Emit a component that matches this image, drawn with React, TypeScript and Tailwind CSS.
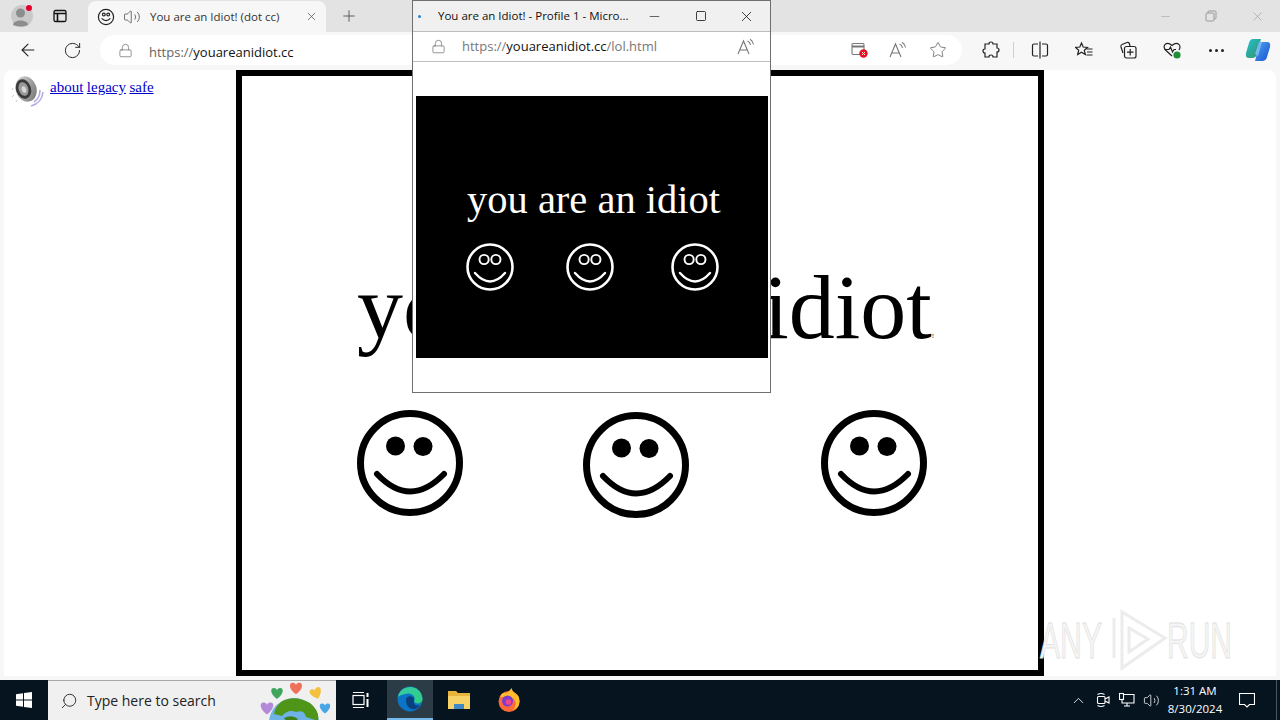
import { ArrowLeft, ChevronUp, Lock, Minus, Plus, RotateCw, Search, Square, Star, Volume2, X } from "lucide-react";

const uiFont = { fontFamily: '"Open Sans", "Noto Sans", sans-serif' };

const heart = "M0 6 C-8 0 -6.5 -6 -2.5 -5 Q-0.5 -4.5 0 -3 Q0.5 -4.5 2.5 -5 C6.5 -6 8 0 0 6Z";

function BigSmiley({ className = "" }: { className?: string }) {
  return (
    <svg viewBox="-54 -54 108 108" className={`h-[108px] w-[108px] shrink-0 ${className}`}>
      <circle r="49.5" fill="none" stroke="#000" strokeWidth="7" />
      <circle cx="-14.5" cy="-17" r="9.5" />
      <circle cx="13" cy="-16.5" r="9.5" />
      <path d="M-33 11 Q0 46 34 11" fill="none" stroke="#000" strokeWidth="6" strokeLinecap="round" />
    </svg>
  );
}

function SmallSmiley({ className = "" }: { className?: string }) {
  return (
    <svg viewBox="-24 -24 48 48" className={`h-12 w-12 shrink-0 ${className}`}>
      <circle r="22.5" fill="none" stroke="#fff" strokeWidth="2.6" />
      <circle cx="-5.9" cy="-7.5" r="4.6" fill="none" stroke="#fff" strokeWidth="1.9" />
      <circle cx="5.9" cy="-7.5" r="4.6" fill="none" stroke="#fff" strokeWidth="1.9" />
      <path d="M-15 6 Q0 23 15 6" fill="none" stroke="#fff" strokeWidth="2.4" strokeLinecap="round" />
    </svg>
  );
}

function TabSmiley() {
  return (
    <svg viewBox="0 0 18 18" className="h-[18px] w-[18px] shrink-0" fill="none" stroke="#222" strokeWidth="1.2">
      <circle cx="9" cy="9" r="7.6" />
      <circle cx="6.8" cy="6.6" r="1.4" />
      <circle cx="11.2" cy="6.6" r="1.4" />
      <path d="M4.6 10.4 Q9 15 13.4 10.4" />
    </svg>
  );
}

function Speaker() {
  return (
    <svg viewBox="0 0 34 34" className="h-[34px] w-[34px] shrink-0">
      <defs>
        <linearGradient id="cone" x1="0" y1="0" x2="1" y2="1">
          <stop offset="0" stopColor="#e6e6e6" />
          <stop offset="0.5" stopColor="#a8a8a8" />
          <stop offset="1" stopColor="#6c6c6c" />
        </linearGradient>
      </defs>
      <g fill="none" stroke="#b4aee0" strokeWidth="1.6">
        <path d="M23 27 Q29 23 29 15" />
        <path d="M20 31 Q31 28 32 17" />
      </g>
      <path d="M2 13 L1 15 M3 20 L1 22 M6 25 L5 27" stroke="#c8c8d8" strokeWidth="1" />
      <ellipse cx="15" cy="14" rx="10.5" ry="13" fill="url(#cone)" transform="rotate(-18 15 14)" />
      <ellipse cx="12.5" cy="14" rx="7.5" ry="10" fill="#3a3a3a" transform="rotate(-18 12.5 14)" />
      <ellipse cx="12.5" cy="14" rx="4.8" ry="7" fill="#9a9a9a" transform="rotate(-18 12.5 14)" />
      <ellipse cx="13" cy="14.5" rx="2.2" ry="3.4" fill="#d8d8d8" transform="rotate(-18 13 14.5)" />
    </svg>
  );
}

function Profile() {
  return (
    <svg viewBox="0 0 24 24" className="h-6 w-6">
      <circle cx="12" cy="12" r="11" fill="#c9c9c9" />
      <circle cx="10.5" cy="9" r="4.5" fill="#8d8d8d" />
      <path d="M3 21 C3 15 18 15 18 21 Q10 24 3 21Z" fill="#8d8d8d" />
      <circle cx="19" cy="4" r="3" fill="#e4002b" />
    </svg>
  );
}

function ReadAloud({ color = "#777" }: { color?: string }) {
  return (
    <svg viewBox="0 0 18 18" className="h-[18px] w-[18px]" fill="none" stroke={color} strokeWidth="1.1">
      <path d="M1 16 L6.5 3 L12 16 M3 12 H10" />
      <path d="M10.5 3 Q13 4 13.5 7 M13 1.2 Q16 3 16.5 6.5" />
    </svg>
  );
}

function EdgeLogo() {
  return (
    <svg viewBox="0 0 26 26" className="h-[26px] w-[26px]">
      <defs>
        <linearGradient id="edgeA" x1="0" y1="0" x2="1" y2="1">
          <stop offset="0" stopColor="#37c9a5" />
          <stop offset="1" stopColor="#2dd07e" />
        </linearGradient>
      </defs>
      <circle cx="13" cy="13" r="12.5" fill="#0c74c4" />
      <path d="M1 11 C3 -2 24 -3 25.5 13 C25.5 18 18 19 17 15 C20 10 13 6 8 8 C4 9 2 10 1 11Z" fill="url(#edgeA)" />
      <path d="M9 14 C9 9 18 9 17 15 C16 20 21 20 23 19 C19 26 9 24 9 14Z" fill="#0b3f7e" />
    </svg>
  );
}

function FolderLogo() {
  return (
    <svg viewBox="0 0 24 22" className="h-[22px] w-6">
      <path d="M1 2 H9 L11 4 H23 V20 H1Z" fill="#e9b43c" />
      <path d="M1 7 H23 V20 H1Z" fill="#f7d267" />
      <rect x="7" y="15" width="10" height="5" fill="#3f88c5" />
    </svg>
  );
}

function FirefoxLogo() {
  return (
    <svg viewBox="0 0 24 24" className="h-6 w-6">
      <circle cx="12" cy="13.5" r="10.5" fill="#ff6a35" />
      <path d="M3 9 Q5 4 9 5 Q13 3 14.5 0 Q15 3 18 5 Q23 8 22.5 14 Q22 20 16 22 Q21 16 17 11 Q13 7 8 9 Q5 9 3 9Z" fill="#ffbd2e" />
      <circle cx="10.5" cy="13" r="5.5" fill="#7e3bd0" />
      <circle cx="11.5" cy="14" r="2.8" fill="#f0468c" />
    </svg>
  );
}

function Copilot() {
  return (
    <svg viewBox="0 0 26 26" className="h-[26px] w-[26px]">
      <defs>
        <linearGradient id="copA" x1="0" y1="0" x2="1" y2="1">
          <stop offset="0" stopColor="#1fc3d8" />
          <stop offset="1" stopColor="#3a8f5d" />
        </linearGradient>
        <linearGradient id="copB" x1="0" y1="0" x2="1" y2="1">
          <stop offset="0" stopColor="#4ba8f2" />
          <stop offset="1" stopColor="#1b4fd0" />
        </linearGradient>
      </defs>
      <path d="M8 2 H16 L12 17 Q11 21 7 21 H4 Q0 21 1 16 L4 6 Q5 2 8 2Z" fill="url(#copA)" />
      <path d="M14 5 H22 Q26 5 25 10 L22 20 Q21 24 17 24 H10 L14 9 Z" fill="url(#copB)" />
      <path d="M10 17 L14 5 H17 L13 19Z" fill="#7ab5f5" />
    </svg>
  );
}

function Globe() {
  return (
    <svg viewBox="0 0 76 40" className="h-10 w-[76px]">
      <circle cx="34" cy="42" r="25" fill="#6fb2e8" />
      <path d="M21 21 Q34 13 50 22 Q60 30 58 40 L46 36 Q44 28 36 31 Q28 28 22 35 L14 33 Q15 26 21 21Z" fill="#4f9618" />
      <path d="M24 37 Q32 33 38 38 L36 40 H26Z" fill="#3f7f14" />
      <g transform="translate(36 7) scale(1.05)"><path d={heart} fill="#f0715a" /></g>
      <g transform="translate(17 12)"><path d={heart} fill="#3fa55c" /></g>
      <g transform="translate(56 12) rotate(-20)"><path d={heart} fill="#f3c13d" /></g>
      <g transform="translate(7 27) scale(1.1)"><path d={heart} fill="#b48ad8" /></g>
      <g transform="translate(65 27) scale(0.9)"><path d={heart} fill="#49a6e6" /></g>
    </svg>
  );
}

function Watermark() {
  return (
    <svg viewBox="0 0 210 70" className="absolute bottom-0 right-[36px] h-[70px] w-[210px] overflow-visible">
      <g fontFamily="Liberation Sans, sans-serif" fontSize="50" fill="#f5f5f5" stroke="#e0e0e0" strokeWidth="0.8">
        <text x="10" y="52" textLength="62" lengthAdjust="spacingAndGlyphs">ANY</text>
        <text x="137" y="52" textLength="65" lengthAdjust="spacingAndGlyphs">RUN</text>
      </g>
      <g fill="none" stroke="#ececec" strokeWidth="3">
        <path d="M84 12 V52" />
        <path d="M92 6 L135 32 L92 62 V6Z" />
        <path d="M99 22 L118 33 L99 46Z" />
      </g>
    </svg>
  );
}

function Popup() {
  return (
    <div className="absolute left-[412px] top-0 flex h-[393px] w-[359px] flex-col border border-[#6f6f6f] bg-white" style={uiFont}>
      <div className="flex h-[31px] shrink-0 items-center border-b border-[#bdbdbd] bg-[#f0f0f0] text-[#111]">
        <span className="ml-[5px] h-[3px] w-[3px] rounded-full bg-[#2f7fd0]" />
        <span className="ml-[17px] w-[209px] text-[11.5px] leading-none">You are an Idiot! - Profile 1 - Micro...</span>
        <Minus className="h-[15px] w-[15px]" strokeWidth={1} />
        <Square className="ml-[33px] h-[12px] w-[12px]" strokeWidth={1.6} />
        <X className="ml-[31px] h-[17px] w-[17px]" strokeWidth={1.1} />
      </div>
      <div className="flex h-[30px] shrink-0 items-center border-b border-[#bdbdbd] bg-white">
        <Lock className="ml-[18px] h-[15px] w-[15px] text-[#666]" strokeWidth={1.1} />
        <span className="ml-[16px] w-[275px] text-[13px] leading-none text-[#777]">
          https://<span className="text-[#111]">youareanidiot.cc</span>/lol.html
        </span>
        <ReadAloud />
      </div>
      <div className="flex-1 px-[3px] pt-[34px]">
        <div className="h-[262px] w-[352px] bg-black pl-[51px] pt-[84px] text-white" style={{ fontFamily: '"Liberation Serif", serif' }}>
          <div className="whitespace-nowrap text-[40.5px] leading-[40px]">
            you are an idiot<span className="text-[3px]">!</span>
          </div>
          <div className="mt-[11px] flex">
            <SmallSmiley className="-ml-[1px]" />
            <SmallSmiley className="ml-[52px]" />
            <SmallSmiley className="ml-[57px]" />
          </div>
        </div>
      </div>
    </div>
  );
}

export default function App() {
  return (
    <div className="relative flex h-[720px] w-[1280px] flex-col overflow-hidden bg-[#f7f7f7]" style={uiFont}>
      {/* title strip */}
      <div className="flex h-8 shrink-0 items-center bg-[#e3e3e3]">
        <div className="ml-[10px] flex w-6 justify-center"><Profile /></div>
        <div className="ml-[14px] flex w-6 justify-center">
          <svg viewBox="0 0 14 14" className="h-[14px] w-[14px]" fill="none" stroke="#111" strokeWidth="1.3">
            <rect x="1" y="1.5" width="12" height="11" rx="1.5" />
            <path d="M1 4.5 H13 M4.5 4.5 V12" strokeWidth="1.6" />
          </svg>
        </div>
        <div className="ml-[16px] flex h-[31px] w-[238px] items-center self-end rounded-t-lg bg-[#f7f7f7] pl-[9px]">
          <TabSmiley />
          <Volume2 className="ml-[8px] h-[18px] w-[18px] text-[#444]" strokeWidth={1} />
          <span className="ml-[9px] w-[151px] whitespace-nowrap text-[11.5px] text-[#333]">You are an Idiot! (dot cc)</span>
          <X className="ml-[4px] h-[13px] w-[13px] text-[#555]" strokeWidth={1.4} />
        </div>
        <Plus className="ml-[14px] h-[18px] w-[18px] text-[#444]" strokeWidth={1.1} />
        <div className="ml-auto flex items-center text-[#9a9a9a]">
          <Minus className="h-[13px] w-[13px]" strokeWidth={1} />
          <svg viewBox="0 0 12 12" className="ml-[33px] h-[12px] w-[12px]" fill="none" stroke="#9a9a9a">
            <rect x="1" y="3" width="8" height="8" rx="1" />
            <path d="M3 3 V1.5 Q3 1 4 1 H10 Q11 1 11 2 V8 Q11 9 9 9" />
          </svg>
          <X className="ml-[33px] mr-[15px] h-[15px] w-[15px]" strokeWidth={1} />
        </div>
      </div>

      {/* toolbar */}
      <div className="flex h-9 shrink-0 items-center">
        <div className="flex w-[56px] justify-center"><ArrowLeft className="h-5 w-5 text-[#222]" strokeWidth={1.3} /></div>
        <div className="flex w-[32px] justify-center"><RotateCw className="h-[19px] w-[19px] text-[#222]" strokeWidth={1.2} /></div>
        <div className="ml-[12px] flex h-[30px] w-[862px] items-center rounded-full bg-white">
          <Lock className="ml-[18px] h-[15px] w-[15px] text-[#666]" strokeWidth={1.1} />
          <span className="ml-[16px] mt-[4px] text-[13px] leading-none text-[#666]">
            https://<span className="text-[#111]">youareanidiot.cc</span>
          </span>
          <div className="ml-auto flex items-center pr-[4px]">
            <div className="flex w-9 justify-center">
              <svg viewBox="0 0 18 18" className="h-[18px] w-[18px]">
                <rect x="1" y="2.5" width="12" height="11" rx="1" fill="none" stroke="#777" strokeWidth="1.1" />
                <path d="M1 5.5 H13" stroke="#777" strokeWidth="2" />
                <circle cx="12.5" cy="12.5" r="4.2" fill="#e81123" />
                <path d="M11 11 L14 14 M14 11 L11 14" stroke="#fff" strokeWidth="0.9" />
              </svg>
            </div>
            <div className="flex w-10 justify-center"><ReadAloud /></div>
            <div className="flex w-10 justify-center"><Star className="h-[18px] w-[18px] text-[#666]" strokeWidth={1.1} /></div>
          </div>
        </div>
        <div className="ml-[7px] flex w-11 justify-center">
          <svg viewBox="0 0 18 18" className="h-[18px] w-[18px]" fill="none" stroke="#222" strokeWidth="1.2">
            <path d="M7 3 Q7 1 9 1 Q11 1 11 3 H15 V7 Q17 7 17 9 Q17 11 15 11 V16 H11 Q11 14 9 14 Q7 14 7 16 H3 V12 Q1 12 1 10 Q1 8 3 8 V3Z" />
          </svg>
        </div>
        <div className="h-[16px] w-px bg-[#cfcfcf]" />
        <div className="ml-[4px] flex w-11 justify-center">
          <svg viewBox="0 0 18 18" className="h-[18px] w-[18px]" fill="none" stroke="#222" strokeWidth="1.2">
            <path d="M9 0.5 V17.5 M7 3 H3 Q1.5 3 1.5 4.5 V13.5 Q1.5 15 3 15 H7 M11 3 H15 Q16.5 3 16.5 4.5 V13.5 Q16.5 15 15 15 H11" />
          </svg>
        </div>
        <div className="flex w-11 justify-center">
          <svg viewBox="0 0 18 18" className="h-[18px] w-[18px]" fill="none" stroke="#222" strokeWidth="1.2">
            <path d="M6.5 2 L8.2 6 L12.5 6.4 L9.3 9.2 L10.3 13.5 L6.5 11.2 L2.7 13.5 L3.7 9.2 L0.5 6.4 L4.8 6Z" />
            <path d="M11.5 8 H17.5 M12 11 H17.5 M11.5 14 H17.5" />
          </svg>
        </div>
        <div className="flex w-11 justify-center">
          <svg viewBox="0 0 18 18" className="h-[18px] w-[18px]" fill="none" stroke="#222" strokeWidth="1.2">
            <path d="M4 12 L2 6 Q1.5 4 3 3.5 L8 1.5 Q10 1 10.5 3 L11 5" />
            <rect x="5.5" y="5.5" width="11.5" height="11.5" rx="2" />
            <path d="M11.2 8 V14.5 M8 11.2 H14.5" />
          </svg>
        </div>
        <div className="flex w-11 justify-center">
          <svg viewBox="0 0 18 18" className="h-[18px] w-[18px]" fill="none" stroke="#222" strokeWidth="1.2">
            <path d="M9 15 L2.5 9 Q0 6 2 3.5 Q5 1 9 4.5 Q13 1 16 3.5 Q18 6 16 9" />
            <path d="M1.5 8.5 H6 L7.5 6 L9.5 11 L11 8.5 H13" />
            <circle cx="14" cy="14" r="3.6" fill="#1f8f3a" stroke="none" />
          </svg>
        </div>
        <div className="flex w-11 justify-center gap-[3px]">
          <span className="h-[3px] w-[3px] rounded-full bg-[#222]" />
          <span className="h-[3px] w-[3px] rounded-full bg-[#222]" />
          <span className="h-[3px] w-[3px] rounded-full bg-[#222]" />
        </div>
        <div className="flex w-10 justify-center"><Copilot /></div>
      </div>

      {/* page */}
      <div className="relative mx-[4px] mt-[2px] flex h-[606px] shrink-0 rounded-t-lg bg-white" style={{ fontFamily: '"Liberation Serif", serif' }}>
        <div className="flex w-[232px] shrink-0 items-start pl-[7px] pt-[5px]">
          <Speaker />
          <div className="ml-[5px] mt-[4px] flex gap-[3.5px] text-[15px] leading-[17px] text-[#0000cc] underline">
            <span>about</span>
            <span>legacy</span>
            <span>safe</span>
          </div>
        </div>
        <div className="w-[808px] shrink-0 border-[6px] border-black pl-[115px] pt-[185px]">
          <div className="whitespace-nowrap text-[92px] leading-[92px] text-black">
            you are an idiot<span className="text-[7px]">!</span>
          </div>
          <div className="mt-[27px] flex">
            <BigSmiley className="-ml-[1px]" />
            <BigSmiley className="ml-[118px] mt-[2px]" />
            <BigSmiley className="ml-[130px]" />
          </div>
        </div>
        <Watermark />
      </div>

      {/* taskbar */}
      <div className="mt-[4px] flex h-10 shrink-0 items-center bg-[#05141f] text-white">
        <div className="flex w-12 justify-center">
          <svg viewBox="0 0 16 16" className="h-4 w-4" fill="#fff">
            <path d="M0 2.2 L7 1.2 V7.5 H0Z M8 1 L16 0 V7.5 H8Z M0 8.5 H7 V14.8 L0 13.8Z M8 8.5 H16 V16 L8 15Z" />
          </svg>
        </div>
        <div className="flex h-10 w-[288px] items-center border-t border-[#a8a8a8] bg-[#f0f0f0] pl-[12px] text-[#222]">
          <Search className="h-[18px] w-[18px] -scale-x-100" strokeWidth={1.2} />
          <span className="ml-[9px] text-[14px]">Type here to search</span>
          <div className="ml-auto overflow-hidden"><Globe /></div>
        </div>
        <div className="flex w-[49px] justify-center">
          <svg viewBox="0 0 18 18" className="h-[18px] w-[18px]" fill="none" stroke="#fff" strokeWidth="1.2">
            <path d="M1 1.5 H12 M1 16.5 H12" />
            <rect x="1" y="4.5" width="11" height="9" />
            <path d="M15.5 2 V6 M15.5 8 V16" strokeWidth="2" />
          </svg>
        </div>
        <div className="ml-[2px] flex h-10 w-[46px] items-center justify-center border-b-2 border-[#76b9ed] bg-[#2c3c47]"><EdgeLogo /></div>
        <div className="ml-[3px] flex w-[46px] justify-center"><FolderLogo /></div>
        <div className="ml-[4px] flex w-[46px] justify-center"><FirefoxLogo /></div>
        <div className="ml-auto flex items-center">
          <ChevronUp className="h-[17px] w-[17px]" strokeWidth={1.2} />
          <div className="ml-[4px] flex w-6 justify-center">
            <svg viewBox="0 0 16 16" className="h-4 w-4" fill="none" stroke="#fff" strokeWidth="1.1">
              <rect x="2.5" y="4.5" width="7.5" height="7" rx="1" />
              <path d="M10 7 L14 5 V11 L10 9 M2.5 2.5 Q6 0.5 9.5 2.5 M2.5 13.5 Q6 15.5 9.5 13.5" />
            </svg>
          </div>
          <div className="flex w-6 justify-center">
            <svg viewBox="0 0 16 16" className="h-4 w-4" fill="none" stroke="#fff" strokeWidth="1.1">
              <path d="M5 2.5 H15 V11 H3 V8 M8 11 V14 M5 14 H11" />
              <rect x="0.5" y="1.5" width="4" height="6" />
            </svg>
          </div>
          <div className="flex w-6 justify-center"><Volume2 className="h-[17px] w-[17px]" strokeWidth={1.1} /></div>
          <div className="ml-[1px] w-[62px] text-center text-[11.5px] leading-[18px]">
            <div>1:31 AM</div>
            <div>8/30/2024</div>
          </div>
          <div className="ml-[7px] flex w-[28px] justify-center">
            <svg viewBox="0 0 16 16" className="h-4 w-4" fill="none" stroke="#fff" strokeWidth="1.1">
              <path d="M0.5 1.5 H15.5 V12.5 H10.5 L8 15 L5.5 12.5 H0.5Z" />
            </svg>
          </div>
          <div className="ml-[15px] h-10 w-px bg-[#4a5862]" />
          <div className="w-[3px]" />
        </div>
      </div>

      <Popup />
    </div>
  );
}
